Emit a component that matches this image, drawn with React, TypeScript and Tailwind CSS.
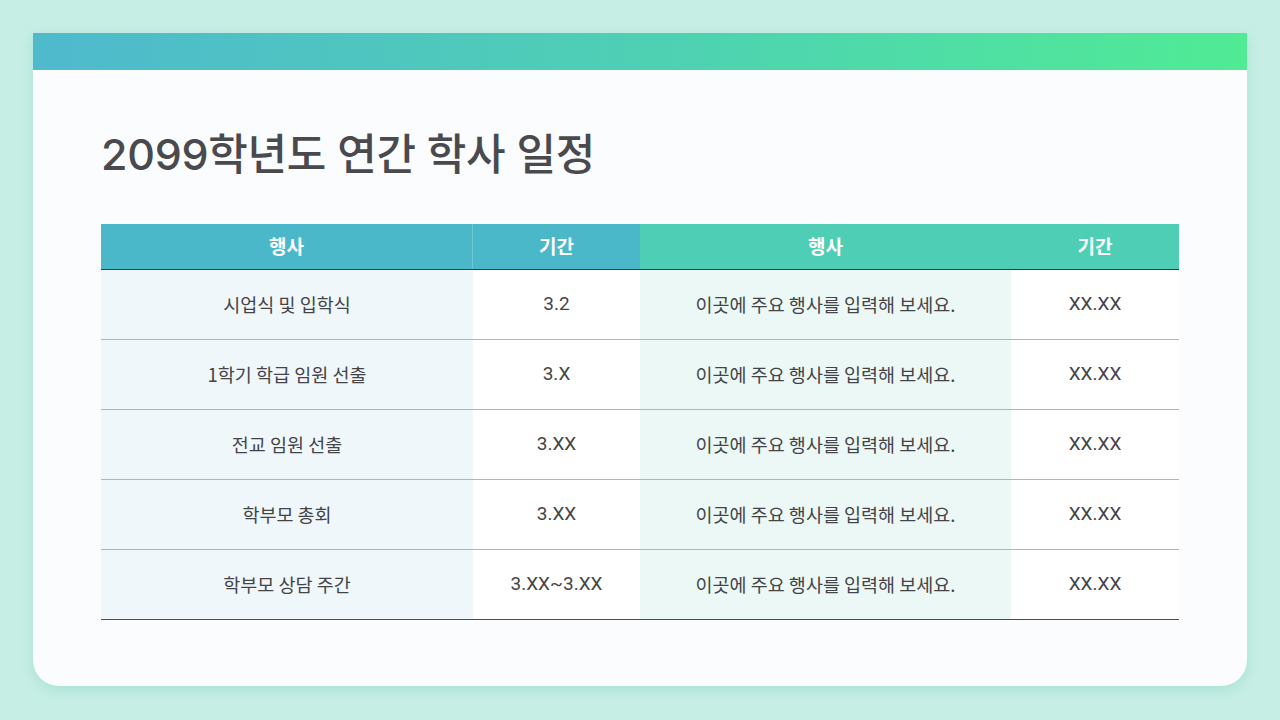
import React from "react";

const rows: [string, string][] = [
  ["시업식 및 입학식", "3.2"],
  ["1학기 학급 임원 선출", "3.X"],
  ["전교 임원 선출", "3.XX"],
  ["학부모 총회", "3.XX"],
  ["학부모 상담 주간", "3.XX~3.XX"],
];

const font = { fontFamily: '"Noto Sans CJK KR", "Noto Sans", sans-serif' };
const num = { fontFamily: '"Roboto", "Noto Sans CJK KR", sans-serif' };

export default function App() {
  return (
    <div className="w-[1280px] h-[720px] bg-[#c7eee5] p-[33px] pb-[34px]" style={font}>
      <div className="w-[1214px] h-[653px] bg-[#fbfcfe] rounded-b-[26px] shadow-[0_4px_14px_rgba(80,190,170,0.25)] flex flex-col overflow-hidden">
        <div className="h-[37px] shrink-0 bg-gradient-to-r from-[#4fb9cd] via-[#4ed0b4] to-[#50eb94]" />
        <div className="pl-[68px] pr-[67px]">
          <h1 className="mt-[55px] h-[58px] text-[43px] leading-[58px] font-medium text-[#4a4a4e] tracking-[-0.3px]" style={{ fontFamily: '"Inter", "Noto Sans CJK KR", sans-serif' }}>
            2099학년도 연간 학사 일정
          </h1>
          <div className="mt-[41px] w-[1078px]">
            <div className="flex h-[46px] border-b-[1.5px] border-[#3a3d44] text-white text-[19px] font-bold">
              <div className="w-[372px] flex items-center justify-center bg-[#4bb8c9] border-r border-[#6cc9d6]">행사</div>
              <div className="w-[167px] flex items-center justify-center bg-[#4bb8c9]">기간</div>
              <div className="w-[371px] flex items-center justify-center bg-[#4ecfb5]">행사</div>
              <div className="w-[168px] flex items-center justify-center bg-[#4ecfb5]">기간</div>
            </div>
            {rows.map(([a, b], i) => (
              <div
                key={i}
                className={`flex h-[70px] text-[18.5px] text-[#444448] ${i === rows.length - 1 ? "border-b-[1.5px] border-[#4a4d55]" : "border-b border-[#b4b4b8]"}`}
              >
                <div className="w-[372px] flex items-center justify-center bg-[#f0f7fa]">{a}</div>
                <div className="w-[167px] flex items-center justify-center bg-white text-[19px]" style={num}>{b}</div>
                <div className="w-[371px] flex items-center justify-center bg-[#ebf8f5]">이곳에 주요 행사를 입력해 보세요.</div>
                <div className="w-[168px] flex items-center justify-center bg-white text-[19px]" style={num}>XX.XX</div>
              </div>
            ))}
          </div>
        </div>
      </div>
    </div>
  );
}
